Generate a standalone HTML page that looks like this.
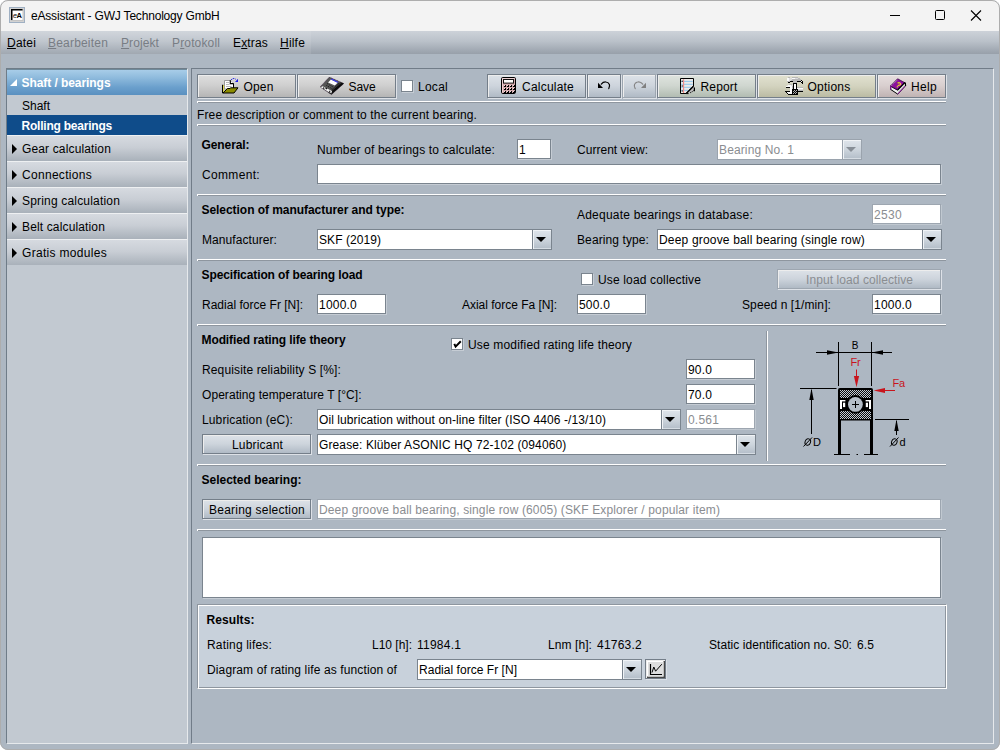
<!DOCTYPE html>
<html>
<head>
<meta charset="utf-8">
<title>eAssistant - GWJ Technology GmbH</title>
<style>
*{box-sizing:border-box;margin:0;padding:0}
html,body{width:1000px;height:750px;overflow:hidden;background:#fff}
body{font-family:"Liberation Sans",sans-serif;font-size:12px;color:#000;position:relative}
.abs{position:absolute}
#win{position:absolute;left:0;top:0;width:1000px;height:750px;background:#adb7c2;border-radius:8px;overflow:hidden}
#winb{position:absolute;left:0;top:0;width:1000px;height:750px;border:1px solid #adadad;border-radius:8px;pointer-events:none}
#title{position:absolute;left:0;top:0;width:1000px;height:31px;background:#f3f3f3}
#menu{position:absolute;left:0;top:31px;width:1000px;height:23px;background:linear-gradient(#cdd2d9 0%,#bac1c9 45%,#9ca4ae 92%,#98a0aa 100%)}
.lbl{position:absolute;white-space:nowrap;line-height:14px;font-size:12px}
.lbl u{text-decoration-thickness:1px;text-underline-offset:1px}
.b{font-weight:bold}
.sep{position:absolute;height:2px;background:#8e969f;border-top:1px solid #fff;border-left:1px solid #fff}
.vsep{position:absolute;width:2px;background:#fff;border-left:1px solid #8e969f}
.tf{position:absolute;background:#fff;border:1px solid #7a848e;box-shadow:1px 1px 0 #c5ccd4}
.tf.dis{border-color:#9da6b0;box-shadow:1px 1px 0 #c0c8d0}
.cb.dis{border-color:#9aa3ad}
.btn.dis{border-color:#9da6b0}
.cb{position:absolute;background:#fff;border:1px solid #7a848e}
.btn{position:absolute;border:1px solid #747e89;background:linear-gradient(#dedede 0%,#d0d0d0 45%,#b5b5b5 100%);box-shadow:inset 1px 1px 0 #ededed,1px 1px 0 #dde1e7}
.btn.blue{background:linear-gradient(#dde2e8 0%,#cdd4dc 50%,#b0bac5 100%)}
.btn.green{background:linear-gradient(#dfe4df 0%,#cfd6cf 50%,#b2bcb2 100%)}
.btn.yel{background:linear-gradient(#e1e1d0 0%,#d3d3bf 50%,#bbbba3 100%)}
.btn.pink{background:linear-gradient(#e6dede 0%,#d8cece 50%,#c0b3b3 100%)}
.cbtn{position:absolute;border-left:1px solid #7a848e;background:linear-gradient(#dfe5eb 0%,#cdd5dd 50%,#b3bdc8 100%);box-shadow:inset 1px 1px 0 #f0f3f6,inset 0 -1px 0 #d5dce3}
.cbtn.dis{border-left-color:#9aa3ad}
.arr{position:absolute;width:0;height:0;border-left:5px solid transparent;border-right:5px solid transparent;border-top:5.5px solid #000}
.chk{position:absolute;width:12px;height:12px;background:#fff;border:1px solid #7a848e;box-shadow:1px 1px 0 #c5ccd4}
.si{position:absolute;left:7px;width:180px;height:26px;background:linear-gradient(#d6dae0 0%,#c9ced5 45%,#a9b1ba 100%);border-top:1px solid #eef0f2}
.si i{position:absolute;left:5px;top:7.5px;width:0;height:0;border-top:5px solid transparent;border-bottom:5px solid transparent;border-left:5.5px solid #000}
</style>
</head>
<body>
<div id="win">
<div id="title"><svg class="abs" style="left:9px;top:7px" width="16" height="16" viewBox="0 0 16 16"><rect x="0.5" y="0.5" width="15" height="15" fill="#d2d2d2" stroke="#9fb0c3"/><rect x="2" y="2" width="12" height="11.5" fill="#000"/><rect x="3.5" y="3.5" width="10.5" height="10" fill="#fff"/><path d="M2 13.5 H14 V2" stroke="#c4c4c4" stroke-width="1" fill="none"/><text x="4" y="10.6" font-family="Liberation Sans, sans-serif" font-size="7" font-style="italic" fill="#000">e</text><text x="7.6" y="10.8" font-family="Liberation Sans, sans-serif" font-size="7.5" font-weight="bold" fill="#000">A</text></svg><div class="lbl" style="left:31px;top:9px;letter-spacing:-0.19px">eAssistant - GWJ Technology GmbH</div><svg class="abs" style="left:880px;top:0" width="120" height="31" viewBox="0 0 120 31"><path d="M10 15.5 H20" stroke="#000" stroke-width="1"/><rect x="55.5" y="10.5" width="9" height="9" rx="1" fill="none" stroke="#000" stroke-width="1"/><path d="M91 10.5 L101 20.5 M101 10.5 L91 20.5" stroke="#000" stroke-width="1.1"/></svg></div><div id="menu"><div style="position:absolute;left:0;top:0;width:311px;height:23px;background:rgba(255,255,255,0.09)"></div></div><div class="lbl" style="left:7px;top:36px;letter-spacing:0.197px"><u>D</u>atei</div><div class="lbl" style="left:48px;top:36px;letter-spacing:0.196px;color:#787d84"><u>B</u>earbeiten</div><div class="lbl" style="left:121px;top:36px;letter-spacing:0.093px;color:#787d84"><u>P</u>rojekt</div><div class="lbl" style="left:172px;top:36px;letter-spacing:0.146px;color:#787d84">P<u>r</u>otokoll</div><div class="lbl" style="left:233px;top:36px;letter-spacing:0.165px">E<u>x</u>tras</div><div class="lbl" style="left:280px;top:36px;letter-spacing:0.199px"><u>H</u>ilfe</div><div class="abs" style="left:6px;top:68px;width:182px;height:676px;background:#c2c9d1;border:1px solid #6f7c88;border-right-color:#e6e9ec;border-bottom-color:#e6e9ec"></div><div class="abs" style="left:7px;top:69px;width:180px;height:26px;border-top:1px solid #6f8a9b;background:linear-gradient(#a8cde8 0%,#8fbbdd 30%,#6a9fcc 70%,#5a90c0 100%)"></div><svg class="abs" style="left:10px;top:79px" width="7" height="7" viewBox="0 0 7 7"><path d="M7 0 L7 7 L0 7 Z" fill="#fff"/></svg><div class="lbl b" style="left:21.5px;top:76px;letter-spacing:-0.064px;color:#fff">Shaft / bearings</div><div class="lbl" style="left:22px;top:99px;letter-spacing:-0.004px">Shaft</div><div class="abs" style="left:7px;top:115px;width:180px;height:20px;background:#0f4c8a"></div><div class="lbl b" style="left:21.5px;top:119px;letter-spacing:-0.219px;color:#fff">Rolling bearings</div><div class="si" style="top:135px"><i></i></div><div class="lbl" style="left:22px;top:142px;letter-spacing:0.143px">Gear calculation</div><div class="si" style="top:161px"><i></i></div><div class="lbl" style="left:22px;top:168px;letter-spacing:0.299px">Connections</div><div class="si" style="top:187px"><i></i></div><div class="lbl" style="left:22px;top:194px;letter-spacing:0.182px">Spring calculation</div><div class="si" style="top:213px"><i></i></div><div class="lbl" style="left:22px;top:220px;letter-spacing:0.143px">Belt calculation</div><div class="si" style="top:239px"><i></i></div><div class="lbl" style="left:22px;top:246px;letter-spacing:0.307px">Gratis modules</div><div class="abs" style="left:191px;top:68px;width:803px;height:676px;background:#adb7c2;border:1px solid #717c88;border-right-color:#e6e9ec;border-bottom-color:#e6e9ec"></div><div class="btn " style="left:197px;top:74px;width:99px;height:24px"></div><svg class="abs" style="left:222px;top:78px" width="17" height="17" viewBox="0 0 17 17" ><path d="M2.5 2.5 H8.5 L11.5 5.5 V11 H2.5 Z" fill="#fff" stroke="#9a9a9a" stroke-width="1"/><path d="M8.3 2.3 V5.7 H11.7" fill="#fff" stroke="#000" stroke-width="1.2"/><path d="M11.5 5.5 V10" stroke="#000" stroke-width="1"/><path d="M4 4.5 H7.5 M4 6.5 H7.5 M4 8.5 H9.5" stroke="#b8b8b8" stroke-width="1"/><path d="M0.5 7 V15 H12 L16 10 H5.5 L2 13.5 V7 Z" fill="#d9d24a" stroke="none"/><path d="M1 15 L5.5 10.5 L8 10.5 L8.5 9.8 H16 L12 15 Z" fill="#8c8c00" stroke="#000" stroke-width="1" stroke-linejoin="round"/><path d="M0.6 6.8 V15.2" stroke="#000" stroke-width="1.2"/><path d="M1.6 7.5 V13.8" stroke="#e2dc55" stroke-width="1"/><path d="M9.2 2 C10 0.2 12.6 -0.2 14.2 1.8" fill="none" stroke="#2222e0" stroke-width="1" stroke-dasharray="1.2 0.8"/><path d="M16 0.8 V3.9 H13 Z" fill="#1a1af0"/></svg><div class="lbl" style="left:243.5px;top:80px;letter-spacing:0.161px">Open</div><div class="btn " style="left:297px;top:74px;width:99px;height:24px"></div><svg class="abs" style="left:320px;top:77px" width="25" height="19" viewBox="0 0 25 19" ><path d="M9.3 0.1 L23.8 6.6 L11.4 17.6 L0.1 9.9 Z" fill="#555" stroke="#3a2040" stroke-width="0.7" stroke-dasharray="1 0.7"/><path d="M23.8 6.6 L11.4 17.6 L9.2 16.1 L21.6 5.6 Z" fill="#0c0c0c"/><path d="M21.6 5.6 L9.2 16.1 L8.2 15.4 L20.4 5.1 Z" fill="#2e2e2e"/><path d="M8.1 5.4 L10.9 2.4 L17.6 5.7 L14.8 8.5 Z" fill="#fff"/><path d="M10.9 2.4 L11.7 1.5 L18.4 4.9 L17.6 5.7 Z" fill="#3c3cf2"/><path d="M0.8 10.2 L2.6 9.2 L12 14 L11.3 16.6 Z" fill="#f4f4f4"/><path d="M3.3 10 L4.2 10.4 L4.4 12.8 L3.2 12 Z M5.6 10.6 L7.2 11.2 L6.8 12.4 L5.4 11.8 Z M9.3 13.4 L10.3 13.9 L10.2 16 L9.1 15.3 Z" fill="#111"/><path d="M7.2 6.6 l0.9 0.5 M8.9 7.6 l0.9 0.5 M10.6 8.6 l0.9 0.5 M12.3 9.6 l0.9 0.5 M6.4 8.4 l0.9 0.5 M8.1 9.4 l0.9 0.5 M9.8 10.4 l0.9 0.5 M11.5 11.4 l0.9 0.5 M15.4 9.2 l0.7 -0.6 M16.8 8 l0.7 -0.6 M18.2 6.8 l0.7 -0.6" stroke="#111" stroke-width="0.9"/></svg><div class="lbl" style="left:348.5px;top:80px;letter-spacing:-0.088px">Save</div><div class="chk" style="left:401px;top:80px"></div><div class="lbl" style="left:418px;top:80px;letter-spacing:0.263px">Local</div><div class="btn blue" style="left:487px;top:74px;width:99px;height:24px"></div><svg class="abs" style="left:501px;top:77px" width="15" height="17" viewBox="0 0 15 17" ><rect x="0.5" y="0.5" width="14" height="16" rx="1.2" fill="#d2a9ad" stroke="#000" stroke-width="1"/><path d="M1.5 1.5 H13.5 M1.5 1.5 V15.5" stroke="#ecd0d2" stroke-width="1" fill="none"/><rect x="2.5" y="2.5" width="10" height="3.6" fill="#fff" stroke="#111" stroke-width="1"/><rect x="3" y="8" width="2" height="2" fill="#000"/><rect x="3" y="8" width="1" height="1" fill="#f4dcdc"/><rect x="3" y="11" width="2" height="2" fill="#000"/><rect x="3" y="11" width="1" height="1" fill="#f4dcdc"/><rect x="3" y="14" width="2" height="2" fill="#000"/><rect x="3" y="14" width="1" height="1" fill="#f4dcdc"/><rect x="6" y="8" width="2" height="2" fill="#000"/><rect x="6" y="8" width="1" height="1" fill="#f4dcdc"/><rect x="6" y="11" width="2" height="2" fill="#000"/><rect x="6" y="11" width="1" height="1" fill="#f4dcdc"/><rect x="6" y="14" width="2" height="2" fill="#000"/><rect x="6" y="14" width="1" height="1" fill="#f4dcdc"/><rect x="9" y="8" width="2" height="2" fill="#000"/><rect x="9" y="8" width="1" height="1" fill="#f4dcdc"/><rect x="9" y="11" width="2" height="2" fill="#000"/><rect x="9" y="11" width="1" height="1" fill="#f4dcdc"/><rect x="9" y="14" width="2" height="2" fill="#000"/><rect x="9" y="14" width="1" height="1" fill="#f4dcdc"/><rect x="12" y="8" width="2" height="2" fill="#000"/><rect x="12" y="8" width="1" height="1" fill="#f4dcdc"/><rect x="12" y="11" width="2" height="2" fill="#000"/><rect x="12" y="11" width="1" height="1" fill="#f4dcdc"/><rect x="12" y="14" width="2" height="2" fill="#000"/><rect x="12" y="14" width="1" height="1" fill="#f4dcdc"/></svg><div class="lbl" style="left:522px;top:80px;letter-spacing:0.219px">Calculate</div><div class="btn blue" style="left:587px;top:74px;width:34px;height:24px"></div><svg class="abs" style="left:597px;top:81px" width="14" height="9" viewBox="0 0 14 9" ><path d="M1 1.8 V6.9 H6 Z" fill="#000"/><path d="M4.3 3.2 C6.5 0.2 11 0.2 12.4 3.4 C12.9 4.8 12.5 6 11.8 7.6" fill="none" stroke="#000" stroke-width="1.2" stroke-linecap="round"/></svg><div class="btn blue dis" style="left:622px;top:74px;width:34px;height:24px"></div><svg class="abs" style="left:633px;top:81px" width="14" height="9" viewBox="0 0 14 9" ><path d="M13 1.8 V6.9 H8 Z" fill="#808080"/><path d="M9.7 3.2 C7.5 0.2 3 0.2 1.6 3.4 C1.1 4.8 1.5 6 2.2 7.6" fill="none" stroke="#858585" stroke-width="1.2" stroke-linecap="round" stroke-dasharray="2.2 1"/></svg><div class="btn green" style="left:657px;top:74px;width:99px;height:24px"></div><svg class="abs" style="left:680px;top:78px" width="16" height="17" viewBox="0 0 16 17" ><path d="M0.5 0.5 H13.5 V8 L6 15.5 H0.5 Z" fill="#ecebea" stroke="#000" stroke-width="1" stroke-linejoin="miter"/><path d="M1.2 3.4 H12.8 M1.2 6.3 H12.8 M1.2 9.3 H11 M1.2 12.3 H8" stroke="#8ec6ee" stroke-width="1"/><path d="M3.6 1.2 V15" stroke="#f28a8a" stroke-width="1.1"/><circle cx="2.2" cy="3.2" r="0.7" fill="#222"/><circle cx="2.2" cy="8" r="0.7" fill="#222"/><circle cx="2.2" cy="13" r="0.7" fill="#222"/><path d="M13.8 8.6 L6.8 15.6 L9 15.6 L10 14.6 L11.5 14.6 L12.5 13.4 L14.6 12.6 L14.8 9.4 Z" fill="#bdbdbd"/><path d="M13.5 8.2 L6 15.7" stroke="#000" stroke-width="1.3"/><path d="M14.4 9.6 V12.6 H13.4" stroke="#000" stroke-width="1.2" fill="none"/><path d="M7 15.6 H8.6 M10.2 14.6 H11.2 M11.8 13.6 H12.6" stroke="#000" stroke-width="1"/></svg><div class="lbl" style="left:700.5px;top:80px;letter-spacing:0.164px">Report</div><div class="btn yel" style="left:757px;top:74px;width:119px;height:24px"></div><svg class="abs" style="left:784px;top:76px" width="19" height="19" viewBox="0 0 19 19" shape-rendering="crispEdges"><rect x="4" y="1" width="2" height="1" fill="#b8b8b8"/><rect x="8" y="1" width="6" height="1" fill="#b8b8b8"/><rect x="3" y="2" width="2" height="1" fill="#fafafa"/><rect x="5" y="2" width="3" height="1" fill="#dcdcdc"/><rect x="8" y="2" width="3" height="1" fill="#fafafa"/><rect x="11" y="2" width="3" height="1" fill="#dcdcdc"/><rect x="14" y="2" width="2" height="1" fill="#b8b8b8"/><rect x="3" y="3" width="2" height="1" fill="#fafafa"/><rect x="5" y="3" width="3" height="1" fill="#dcdcdc"/><rect x="8" y="3" width="9" height="1" fill="#b8b8b8"/><rect x="3" y="4" width="2" height="1" fill="#fafafa"/><rect x="5" y="4" width="2" height="1" fill="#dcdcdc"/><rect x="7" y="4" width="10" height="1" fill="#b8b8b8"/><rect x="17" y="4" width="1" height="1" fill="#000"/><rect x="3" y="5" width="3" height="1" fill="#b8b8b8"/><rect x="6" y="5" width="3" height="1" fill="#000"/><rect x="9" y="5" width="4" height="1" fill="#b8b8b8"/><rect x="13" y="5" width="4" height="1" fill="#000"/><rect x="17" y="5" width="1" height="1" fill="#fafafa"/><rect x="18" y="5" width="1" height="1" fill="#000"/><rect x="4" y="6" width="2" height="1" fill="#000"/><rect x="9" y="6" width="4" height="1" fill="#b8b8b8"/><rect x="17" y="6" width="2" height="1" fill="#000"/><rect x="9" y="7" width="4" height="1" fill="#000"/><rect x="18" y="7" width="1" height="1" fill="#000"/><rect x="5" y="8" width="3" height="1" fill="#b8b8b8"/><rect x="9" y="8" width="1" height="1" fill="#000"/><rect x="10" y="8" width="2" height="1" fill="#fafafa"/><rect x="12" y="8" width="1" height="1" fill="#000"/><rect x="3" y="9" width="1" height="1" fill="#dcdcdc"/><rect x="4" y="9" width="3" height="1" fill="#fafafa"/><rect x="7" y="9" width="2" height="1" fill="#dcdcdc"/><rect x="9" y="9" width="1" height="1" fill="#000"/><rect x="10" y="9" width="2" height="1" fill="#fafafa"/><rect x="12" y="9" width="1" height="1" fill="#000"/><rect x="2" y="10" width="6" height="1" fill="#fafafa"/><rect x="8" y="10" width="1" height="1" fill="#b8b8b8"/><rect x="9" y="10" width="1" height="1" fill="#000"/><rect x="10" y="10" width="2" height="1" fill="#fafafa"/><rect x="12" y="10" width="1" height="1" fill="#000"/><rect x="2" y="11" width="4" height="1" fill="#000"/><rect x="6" y="11" width="2" height="1" fill="#fafafa"/><rect x="8" y="11" width="1" height="1" fill="#b8b8b8"/><rect x="9" y="11" width="1" height="1" fill="#000"/><rect x="10" y="11" width="2" height="1" fill="#fafafa"/><rect x="12" y="11" width="1" height="1" fill="#000"/><rect x="13" y="11" width="6" height="1" fill="#b8b8b8"/><rect x="6" y="12" width="2" height="1" fill="#fafafa"/><rect x="8" y="12" width="1" height="1" fill="#b8b8b8"/><rect x="9" y="12" width="1" height="1" fill="#000"/><rect x="10" y="12" width="2" height="1" fill="#fafafa"/><rect x="12" y="12" width="1" height="1" fill="#000"/><rect x="13" y="12" width="6" height="1" fill="#fafafa"/><rect x="6" y="13" width="2" height="1" fill="#fafafa"/><rect x="8" y="13" width="6" height="1" fill="#000"/><rect x="14" y="13" width="5" height="1" fill="#dcdcdc"/><rect x="6" y="14" width="2" height="1" fill="#fafafa"/><rect x="8" y="14" width="2" height="1" fill="#000"/><rect x="10" y="14" width="1" height="1" fill="#b0b0b0"/><rect x="11" y="14" width="1" height="1" fill="#000"/><rect x="12" y="14" width="1" height="1" fill="#b0b0b0"/><rect x="13" y="14" width="1" height="1" fill="#000"/><rect x="14" y="14" width="5" height="1" fill="#b8b8b8"/><rect x="1" y="15" width="5" height="1" fill="#000"/><rect x="6" y="15" width="2" height="1" fill="#fafafa"/><rect x="8" y="15" width="1" height="1" fill="#000"/><rect x="9" y="15" width="1" height="1" fill="#b0b0b0"/><rect x="10" y="15" width="1" height="1" fill="#000"/><rect x="11" y="15" width="1" height="1" fill="#b0b0b0"/><rect x="12" y="15" width="7" height="1" fill="#000"/><rect x="2" y="16" width="1" height="1" fill="#000"/><rect x="3" y="16" width="5" height="1" fill="#fafafa"/><rect x="8" y="16" width="2" height="1" fill="#000"/><rect x="10" y="16" width="1" height="1" fill="#b0b0b0"/><rect x="11" y="16" width="1" height="1" fill="#000"/><rect x="12" y="16" width="1" height="1" fill="#b0b0b0"/><rect x="13" y="16" width="1" height="1" fill="#000"/><rect x="3" y="17" width="1" height="1" fill="#000"/><rect x="4" y="17" width="4" height="1" fill="#fafafa"/><rect x="8" y="17" width="1" height="1" fill="#000"/><rect x="9" y="17" width="1" height="1" fill="#b0b0b0"/><rect x="10" y="17" width="1" height="1" fill="#000"/><rect x="11" y="17" width="1" height="1" fill="#b0b0b0"/><rect x="12" y="17" width="2" height="1" fill="#000"/><rect x="4" y="18" width="10" height="1" fill="#000"/></svg><div class="lbl" style="left:807.5px;top:80px;letter-spacing:0.235px">Options</div><div class="btn pink" style="left:877px;top:74px;width:69px;height:24px"></div><svg class="abs" style="left:890px;top:78px" width="17" height="18" viewBox="0 0 17 18" ><path d="M0.6 8.2 L7.6 12.2 L14.8 5 L15.4 7.8 L7.8 16.2 L0.6 11.4 Z" fill="#efefef" stroke="#000" stroke-width="1" stroke-linejoin="round"/><path d="M8 12.4 L14.6 5.6 L15.2 7.8 L7.9 15.8 Z" fill="#cfd6cf"/><path d="M7.8 16.6 L15.6 8 L15.6 7 L7.6 15.6 Z" fill="#8a109a"/><path d="M0.5 8 L7.6 0.8 L14.6 4.6 L7.6 11.8 Z" fill="#8c0f9e" stroke="#3a0a44" stroke-width="0.8" stroke-linejoin="round"/><path d="M0.6 8 V11.4" stroke="#7a0f8c" stroke-width="1.4"/><path d="M1.6 7.6 L7.4 1.8" stroke="#d9b8de" stroke-width="0.9" stroke-dasharray="0.9 0.9"/><path d="M7.6 11.8 L14.6 4.6 L15.4 5 L15.6 8" stroke="#000" stroke-width="1.1" fill="none"/><text x="6.2" y="9.6" font-family="Liberation Sans, sans-serif" font-weight="bold" font-size="8" fill="#f2ea10" transform="rotate(28 8.5 6.5)">?</text></svg><div class="lbl" style="left:911px;top:80px;letter-spacing:0.330px">Help</div><div class="sep" style="left:197px;top:101px;width:749px"></div><div class="lbl" style="left:197px;top:108px;letter-spacing:0.128px">Free description or comment to the current bearing.</div><div class="sep" style="left:197px;top:124px;width:749px"></div><div class="lbl b" style="left:201.5px;top:138px;letter-spacing:-0.086px">General:</div><div class="lbl" style="left:317px;top:143px;letter-spacing:0.164px">Number of bearings to calculate:</div><div class="tf" style="left:517px;top:139px;width:34px;height:20px"></div><div class="lbl" style="left:519px;top:143px;letter-spacing:0.326px">1</div><div class="lbl" style="left:577px;top:143px;letter-spacing:0.024px">Current view:</div><div class="cb dis" style="left:717px;top:139px;width:145px;height:21px"></div><div class="lbl" style="left:719px;top:143px;letter-spacing:0.125px;color:#8a8d91">Bearing No. 1</div><div class="cbtn dis" style="left:842px;top:140px;width:19px;height:19px"></div><div class="arr" style="left:846px;top:147px;border-top-color:#878e96"></div><div class="lbl" style="left:202px;top:168px;letter-spacing:0.332px">Comment:</div><div class="tf" style="left:317px;top:164px;width:624px;height:20px"></div><div class="sep" style="left:197px;top:194px;width:749px"></div><div class="lbl b" style="left:201.5px;top:203px;letter-spacing:-0.049px">Selection of manufacturer and type:</div><div class="lbl" style="left:577px;top:208px;letter-spacing:0.218px">Adequate bearings in database:</div><div class="tf dis" style="left:872px;top:204px;width:69px;height:20px"></div><div class="lbl" style="left:874px;top:208px;letter-spacing:0.326px;color:#8a8d91">2530</div><div class="lbl" style="left:202px;top:233px;letter-spacing:0.074px">Manufacturer:</div><div class="cb" style="left:317px;top:229px;width:235px;height:21px"></div><div class="lbl" style="left:319px;top:233px;letter-spacing:0.064px">SKF (2019)</div><div class="cbtn" style="left:532px;top:230px;width:19px;height:19px"></div><div class="arr" style="left:536px;top:237px;border-top-color:#000"></div><div class="lbl" style="left:577px;top:233px;letter-spacing:0.099px">Bearing type:</div><div class="cb" style="left:657px;top:229px;width:285px;height:21px"></div><div class="lbl" style="left:659px;top:233px;letter-spacing:0.177px">Deep groove ball bearing (single row)</div><div class="cbtn" style="left:922px;top:230px;width:19px;height:19px"></div><div class="arr" style="left:926px;top:237px;border-top-color:#000"></div><div class="sep" style="left:197px;top:259px;width:749px"></div><div class="lbl b" style="left:201.5px;top:268px;letter-spacing:-0.104px">Specification of bearing load</div><div class="chk" style="left:581px;top:273px"></div><div class="lbl" style="left:598px;top:273px;letter-spacing:0.155px">Use load collective</div><div class="btn blue dis" style="left:777px;top:269px;width:164px;height:20px"></div><div class="lbl" style="left:806px;top:273px;letter-spacing:0.076px;color:#8a8d91">Input load collective</div><div class="lbl" style="left:202px;top:298px;letter-spacing:0.015px">Radial force Fr [N]:</div><div class="tf" style="left:317px;top:294px;width:69px;height:20px"></div><div class="lbl" style="left:319px;top:298px;letter-spacing:0.216px">1000.0</div><div class="lbl" style="left:462px;top:298px;letter-spacing:-0.019px">Axial force Fa [N]:</div><div class="tf" style="left:577px;top:294px;width:69px;height:20px"></div><div class="lbl" style="left:579px;top:298px;letter-spacing:0.194px">500.0</div><div class="lbl" style="left:742px;top:298px;letter-spacing:0.101px">Speed n [1/min]:</div><div class="tf" style="left:872px;top:294px;width:69px;height:20px"></div><div class="lbl" style="left:874px;top:298px;letter-spacing:0.216px">1000.0</div><div class="sep" style="left:197px;top:324px;width:749px"></div><div class="lbl b" style="left:201.5px;top:333px;letter-spacing:-0.099px">Modified rating life theory</div><div class="chk" style="left:451px;top:338px"></div><svg class="abs" style="left:451px;top:338px" width="12" height="12" viewBox="0 0 12 12"><path d="M3.3 5.8 L4.6 8.6 L9.8 3.2" stroke="#000" stroke-width="2" fill="none"/></svg><div class="lbl" style="left:468px;top:338px;letter-spacing:0.170px">Use modified rating life theory</div><div class="lbl" style="left:202px;top:363px;letter-spacing:0.129px">Requisite reliability S [%]:</div><div class="tf" style="left:686px;top:359px;width:69px;height:20px"></div><div class="lbl" style="left:688px;top:363px;letter-spacing:0.161px">90.0</div><div class="lbl" style="left:202px;top:388px;letter-spacing:0.062px">Operating temperature T [°C]:</div><div class="tf" style="left:686px;top:384px;width:69px;height:20px"></div><div class="lbl" style="left:688px;top:388px;letter-spacing:0.161px">70.0</div><div class="lbl" style="left:202px;top:413px;letter-spacing:0.135px">Lubrication (eC):</div><div class="cb" style="left:317px;top:409px;width:364px;height:21px"></div><div class="lbl" style="left:319px;top:413px;letter-spacing:0.085px">Oil lubrication without on-line filter (ISO 4406 -/13/10)</div><div class="cbtn" style="left:661px;top:410px;width:19px;height:19px"></div><div class="arr" style="left:665px;top:417px;border-top-color:#000"></div><div class="tf dis" style="left:686px;top:409px;width:69px;height:20px"></div><div class="lbl" style="left:688px;top:413px;letter-spacing:0.194px;color:#8a8d91">0.561</div><div class="btn blue" style="left:202px;top:434px;width:109px;height:20px"></div><div class="lbl" style="left:232px;top:438px;letter-spacing:0.182px">Lubricant</div><div class="cb" style="left:317px;top:434px;width:439px;height:21px"></div><div class="lbl" style="left:319px;top:438px;letter-spacing:0.114px">Grease: Klüber ASONIC HQ 72-102 (094060)</div><div class="cbtn" style="left:736px;top:435px;width:19px;height:19px"></div><div class="arr" style="left:740px;top:442px;border-top-color:#000"></div><div class="vsep" style="left:766px;top:331px;height:130px"></div><svg class="abs" style="left:780px;top:330px" width="160" height="130" viewBox="0 0 160 130">
<defs><pattern id="ht" width="2" height="2" patternUnits="userSpaceOnUse"><rect width="2" height="2" fill="#0a0a0a"/><rect width="1" height="1" fill="#c3cbd4"/><rect x="1" y="1" width="1" height="1" fill="#c3cbd4"/></pattern></defs>
<g stroke="#000" stroke-width="1" fill="none">
<path d="M58.5 12 V56 M91.5 12 V56"/>
<path d="M36 22.5 H112"/>
<path d="M20 58.5 H56.5 M31.5 60 V104"/>
<path d="M95 89.5 H129 M116.5 91 V105"/>
<path d="M54 124.5 H70 M76.5 124.5 H78 M84 124.5 H98"/>
</g>
<g fill="#000">
<path d="M58.5 22.5 L47 20.3 V24.7 Z"/><path d="M91.5 22.5 L103 20.3 V24.7 Z"/>
<path d="M31.5 58.5 L29.3 70 H33.7 Z"/><path d="M116.5 89.5 L114.3 101 H118.7 Z"/>
<path d="M58 60 Q58 58 60 58 H91 Q93 58 93 60 V124 H90 V90.5 H61 V124 H58 Z"/>
</g>
<rect x="60" y="60" width="31" height="8" fill="url(#ht)"/>
<rect x="60" y="81" width="31" height="8" fill="url(#ht)"/>
<circle cx="75.4" cy="74.4" r="9.4" fill="#000"/>
<g fill="#fff">
<rect x="60" y="70" width="2" height="9"/><rect x="60" y="70" width="5.4" height="1.4"/><rect x="63" y="72.7" width="2.2" height="4.4"/>
<rect x="89" y="70" width="2" height="9"/><rect x="85.6" y="70" width="5.4" height="1.4"/><rect x="85.8" y="72.7" width="2.2" height="4.4"/>
</g>
<circle cx="75.4" cy="74.4" r="7.4" fill="#b4bdc7"/>
<path d="M72 74.5 H79 M75.5 71 V78" stroke="#000" stroke-width="1"/>
<g stroke="#c8141c" stroke-width="1" fill="#c8141c">
<path d="M76.5 39.5 V50"/><path d="M76.5 57.2 L73.9 46 H79.1 Z" stroke="none"/>
<path d="M115 60.5 H100"/><path d="M93.6 60.5 L105 57.9 V63.1 Z" stroke="none"/>
</g>
<g font-family="Liberation Sans, sans-serif" fill="#000" font-size="11">
<text x="71.8" y="18.8" font-size="10">B</text>
<text x="70.4" y="35.5" fill="#c8141c">Fr</text>
<text x="112.4" y="56.8" fill="#c8141c">Fa</text>
<text x="33" y="115.8">D</text>
<text x="119.5" y="115.8">d</text>
</g>
<g stroke="#000" stroke-width="1" fill="none">
<ellipse cx="27.8" cy="112" rx="2.7" ry="3.3" transform="rotate(20 27.8 112)"/><path d="M23.5 116.5 L32 107.5"/>
<ellipse cx="114.3" cy="112" rx="2.7" ry="3.3" transform="rotate(20 114.3 112)"/><path d="M110 116.5 L118.5 107.5"/>
</g>
</svg><div class="sep" style="left:197px;top:464px;width:749px"></div><div class="lbl b" style="left:201.5px;top:473px;letter-spacing:-0.002px">Selected bearing:</div><div class="btn blue" style="left:202px;top:499px;width:109px;height:20px"></div><div class="lbl" style="left:209px;top:503px;letter-spacing:0.232px">Bearing selection</div><div class="tf dis" style="left:317px;top:499px;width:624px;height:20px"></div><div class="lbl" style="left:319px;top:503px;letter-spacing:0.130px;color:#8a8d91">Deep groove ball bearing, single row (6005) (SKF Explorer / popular item)</div><div class="sep" style="left:197px;top:529px;width:749px"></div><div class="tf" style="left:202px;top:537px;width:739px;height:61px"></div><div class="abs" style="left:197px;top:604px;width:750px;height:85px;background:#c8d1db;border:1px solid;border-color:#8e969f #fff #fff #8e969f;box-shadow:inset 1px 1px 0 #fff, inset -1px -1px 0 #8e969f"></div><div class="lbl b" style="left:206.5px;top:613px;letter-spacing:0.082px">Results:</div><div class="lbl" style="left:207px;top:638px;letter-spacing:0.177px">Rating lifes:</div><div class="lbl" style="left:372px;top:638px;letter-spacing:-0.004px">L10 [h]:</div><div class="lbl" style="left:417px;top:638px;letter-spacing:0.232px">11984.1</div><div class="lbl" style="left:548px;top:638px;letter-spacing:0.081px">Lnm [h]:</div><div class="lbl" style="left:597px;top:638px;letter-spacing:0.232px">41763.2</div><div class="lbl" style="left:709px;top:638px;letter-spacing:0.055px">Static identification no. S0:</div><div class="lbl" style="left:857px;top:638px;letter-spacing:0.106px">6.5</div><div class="lbl" style="left:207px;top:663px;letter-spacing:0.124px">Diagram of rating life as function of</div><div class="cb" style="left:417px;top:659px;width:225px;height:21px"></div><div class="lbl" style="left:419px;top:663px;letter-spacing:0.034px">Radial force Fr [N]</div><div class="cbtn" style="left:622px;top:660px;width:19px;height:19px"></div><div class="arr" style="left:626px;top:667px;border-top-color:#000"></div><div class="btn blue" style="left:645px;top:659px;width:21px;height:20px"></div><svg class="abs" style="left:647px;top:661px" width="18" height="17" viewBox="0 0 18 17"><rect x="0" y="0" width="18" height="17" fill="#484848"/><rect x="0" y="0" width="16.5" height="15.5" fill="#fff"/><rect x="1" y="1" width="15.5" height="14.5" fill="#dedede"/><path d="M3.5 3 V13.5 H15" stroke="#000" stroke-width="1.2" fill="none"/><path d="M5 11.5 L6.8 6 L8.6 10.2 L14.8 3.2" stroke="#000" stroke-width="1" fill="none"/></svg></div><div id="winb"></div></body></html>
